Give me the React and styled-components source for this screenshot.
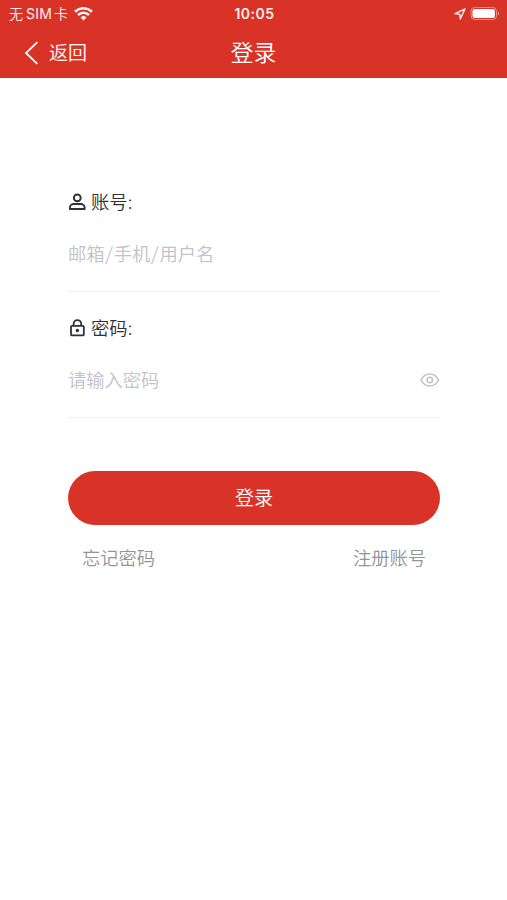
// Packages
import React, { useState } from "react"
import styled, { createGlobalStyle } from "styled-components"

// Styles
const Colors = {
    Primary: "#d93327",
    White: "#ffffff",
    Text: "#303133",
    Placeholder: "#c0c3c8",
    Link: "#929698",
    Line: "#f1f1f2",
}

const Font = `Inter, "Noto Sans CJK SC", sans-serif`

const GlobalStyle = createGlobalStyle`
    * {
        box-sizing: border-box;
    }

    body {
        margin: 0;
        background-color: ${Colors.White};
        font-family: ${Font};
        font-weight: 350;
        color: ${Colors.Text};
    }

    button,
    input {
        font-family: inherit;
        font-weight: inherit;
        border: none;
        padding: 0;
        background: none;
    }
`

const Page = styled.div`
    min-height: 900px;
    display: flex;
    flex-direction: column;
    background-color: ${Colors.White};
`

const Header = styled.header`
    height: 78px;
    background-color: ${Colors.Primary};
    color: ${Colors.White};
`

const StatusBar = styled.div`
    height: 27px;
    padding: 0 7px 0 9px;
    display: grid;
    grid-template-columns: 1fr auto 1fr;
    align-items: center;
    line-height: 27px;
`

const Carrier = styled.div`
    display: flex;
    align-items: center;
    font-size: 14px;
    opacity: 0.92;

    svg {
        margin-left: 6px;
    }
`

const Sim = styled.span`
    margin: 0 2px 0 3px;
    font-size: 14px;
    font-weight: 400;
    letter-spacing: 0.2px;
`

const Clock = styled.time`
    font-size: 14px;
    font-weight: 600;
    letter-spacing: 0.5px;
    opacity: 0.92;
`

const StatusIcons = styled.div`
    display: flex;
    align-items: center;
    justify-content: flex-end;
    gap: 3px;
`

const NavBar = styled.nav`
    height: 51px;
    padding: 0 24px;
    display: grid;
    grid-template-columns: 1fr auto 1fr;
    align-items: center;
`

const BackButton = styled.button`
    display: flex;
    align-items: center;
    gap: 10px;
    color: ${Colors.White};
    font-size: 19px;
    line-height: 28px;
`

const BackText = styled.span`
    padding-top: 2px;
`

const Title = styled.h1`
    margin: 0;
    font-size: 22.8px;
    font-weight: 350;
    line-height: 34px;
`

const Form = styled.form`
    padding: 106px 67px 0 68px;
`

const Field = styled.div`
    margin-bottom: 18px;
`

const Label = styled.label`
    height: 36px;
    display: flex;
    align-items: center;
    gap: 5px;
    font-size: 18.3px;
    line-height: 36px;
`

const InputRow = styled.div`
    height: 72px;
    padding-bottom: 3px;
    display: flex;
    align-items: center;
    border-bottom: 1px solid ${Colors.Line};
`

const Input = styled.input`
    flex: 1;
    min-width: 0;
    height: 68px;
    padding-bottom: 2px;
    outline: none;
    font-family: "Noto Sans CJK SC", sans-serif;
    font-feature-settings: "hwid";
    font-size: 18.3px;
    color: ${Colors.Text};

    &::placeholder {
        color: ${Colors.Placeholder};
        opacity: 1;
    }
`

const EyeButton = styled.button`
    display: flex;
    color: ${Colors.Placeholder};
`

const SubmitButton = styled.button`
    width: 100%;
    height: 54px;
    margin-top: 35px;
    padding-top: 1px;
    border-radius: 27px;
    background-color: ${Colors.Primary};
    color: ${Colors.White};
    font-size: 19px;
    line-height: 53px;
`

const Links = styled.div`
    margin-top: 19px;
    padding: 0 14px;
    display: flex;
    justify-content: space-between;
`

const TextLink = styled.a`
    color: ${Colors.Link};
    font-size: 18.3px;
    line-height: 28px;
    text-decoration: none;
`

// Icons
const WifiIcon = () => (
    <svg width="19" height="14" viewBox="0 0 19 14" fill="none" stroke="currentColor" strokeWidth="2.6">
        <path d="M1 4.7a12.2 12.2 0 0 1 17 0" />
        <path d="M4 8a7.9 7.9 0 0 1 11 0" />
        <path d="M9.5 13.5 6.5 10.5a4.3 4.3 0 0 1 6 0z" fill="currentColor" stroke="none" />
    </svg>
)

const LocationIcon = () => (
    <svg width="12" height="12" viewBox="0 0 12 12" fill="none" stroke="currentColor" strokeWidth="1.4" strokeLinejoin="round" opacity="0.9">
        <path d="M11 1 1 5.6l4.8.7.5 4.7z" />
    </svg>
)

const BatteryIcon = () => (
    <svg width="31" height="14" viewBox="0 0 31 14" fill="none">
        <rect x="2" y="0.5" width="25.5" height="12" rx="3.8" stroke="currentColor" strokeOpacity="0.45" />
        <rect x="3.5" y="2" width="22.4" height="9" rx="2.2" fill="currentColor" />
        <path d="M28.8 4.5c1.8.7 1.8 3.5 0 4.2z" fill="currentColor" fillOpacity="0.45" />
    </svg>
)

const BackIcon = () => (
    <svg width="15" height="24" viewBox="0 0 15 24" fill="none" stroke="currentColor" strokeWidth="1.8">
        <path d="M13.3 1.2 2 12l11.3 10.8" />
    </svg>
)

const UserIcon = () => (
    <svg width="18" height="18" viewBox="0 0 18 18" fill="none" stroke="currentColor" strokeWidth="1.9">
        <circle cx="9.3" cy="4.9" r="3.4" />
        <path d="M1.9 16v-1.6c0-2.1 1.9-3.4 4-3.4h6.7c2.1 0 4 1.3 4 3.4V16z" strokeLinejoin="round" />
    </svg>
)

const LockIcon = () => (
    <svg width="18" height="18" viewBox="0 0 18 18" fill="none" stroke="currentColor" strokeWidth="1.8">
        <rect x="3" y="6.8" width="12.8" height="9.6" rx="1" />
        <path d="M5.6 6.8V4.9a3.8 3.8 0 0 1 7.6 0v1.9" />
        <circle cx="9.4" cy="11.5" r="1.7" fill="currentColor" stroke="none" />
    </svg>
)

const EyeIcon = () => (
    <svg width="20" height="14" viewBox="0 0 20 14" fill="none" stroke="currentColor" strokeWidth="1.6">
        <path d="M1 7c2-3.9 5.2-6 8.8-6s6.8 2.1 8.8 6c-2 3.9-5.2 6-8.8 6S3 10.9 1 7z" strokeLinejoin="round" />
        <circle cx="9.8" cy="7" r="2.7" />
    </svg>
)

function App() {
    const [visible, setVisible] = useState(false)

    return (
        <Page>
            <GlobalStyle />

            <Header>
                <StatusBar>
                    <Carrier>
                        无<Sim>SIM</Sim>卡
                        <WifiIcon />
                    </Carrier>
                    <Clock>10:05</Clock>
                    <StatusIcons>
                        <LocationIcon />
                        <BatteryIcon />
                    </StatusIcons>
                </StatusBar>

                <NavBar>
                    <BackButton type="button">
                        <BackIcon />
                        <BackText>返回</BackText>
                    </BackButton>
                    <Title>登录</Title>
                </NavBar>
            </Header>

            <Form onSubmit={(e) => e.preventDefault()}>
                <Field>
                    <Label htmlFor="account">
                        <UserIcon />
                        账号:
                    </Label>
                    <InputRow>
                        <Input id="account" placeholder="邮箱/手机/用户名" />
                    </InputRow>
                </Field>

                <Field>
                    <Label htmlFor="password">
                        <LockIcon />
                        密码:
                    </Label>
                    <InputRow>
                        <Input
                            id="password"
                            type={visible ? "text" : "password"}
                            placeholder="请输入密码"
                        />
                        <EyeButton type="button" onClick={() => setVisible(!visible)}>
                            <EyeIcon />
                        </EyeButton>
                    </InputRow>
                </Field>

                <SubmitButton type="submit">登录</SubmitButton>

                <Links>
                    <TextLink href="#">忘记密码</TextLink>
                    <TextLink href="#">注册账号</TextLink>
                </Links>
            </Form>
        </Page>
    )
}

export default App
